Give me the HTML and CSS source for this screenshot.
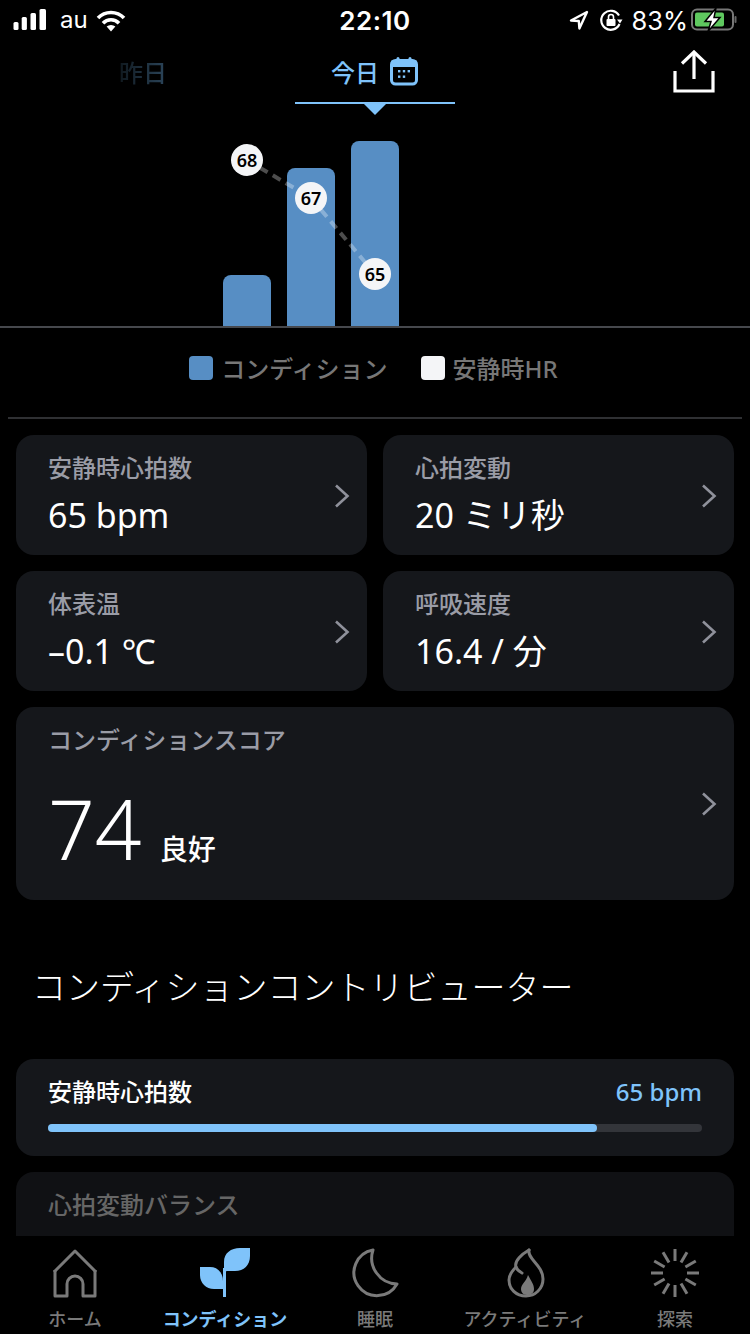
FILE: index.html
```html
<!DOCTYPE html>
<html lang="ja">
<head>
  <meta charset="UTF-8" />
  <meta name="viewport" content="width=device-width, initial-scale=1.0"/>
  <title>コンディション</title>
  <link rel="stylesheet" href="styles.css">
</head>
<body>
<div class="screen">

  <div class="status-bar">
    <div class="status-left">
      <svg class="signal" width="34" height="22" viewBox="0 0 34 22" fill="#fff">
        <rect x="0.5" y="13" width="5" height="8" rx="1.5"/>
        <rect x="8.7" y="8" width="5.2" height="13" rx="1.5"/>
        <rect x="17.5" y="4" width="5.5" height="17" rx="1.5"/>
        <rect x="26.5" y="0" width="6.5" height="21" rx="1.5"/>
      </svg>
      <span class="carrier">au</span>
      <svg class="wifi" width="30" height="22" viewBox="0 0 30 22" fill="none" stroke="#fff" stroke-width="3.6">
        <path d="M2 8 A18 18 0 0 1 28 8"/>
        <path d="M7 13.2 A11 11 0 0 1 23 13.2"/>
        <path d="M15 21.5 L10.6 16.6 A6.5 6.5 0 0 1 19.4 16.6 Z" fill="#fff" stroke="none"/>
      </svg>
    </div>
    <div class="status-time">22:10</div>
    <div class="status-right">
      <svg class="location" width="20" height="20" viewBox="0 0 20 20" fill="none" stroke="#fff" stroke-width="2.4" stroke-linejoin="round">
        <path d="M18 2 L2 10.5 L9.8 11 L10.4 18.5 Z"/>
      </svg>
      <svg class="lock" width="24" height="24" viewBox="0 0 24 24" fill="none" stroke="#fff" stroke-width="2.2">
        <path d="M20 7.5 A9.5 9.5 0 1 0 20.5 16"/>
        <path d="M18 11.5 L23.5 11.5 L21 15.5 Z" fill="#fff" stroke="none"/>
        <rect x="7.5" y="11" width="9" height="7" rx="1" fill="#fff" stroke="none"/>
        <path d="M9.5 11 V9 A2.5 2.5 0 0 1 14.5 9 V11" stroke-width="1.6"/>
      </svg>
      <span class="battery-pct">83%</span>
      <svg width="46" height="24" viewBox="0 0 46 24" fill="none">
        <rect x="1" y="1.5" width="41" height="20" rx="5" stroke="#777" stroke-width="2"/>
        <rect x="4" y="4.5" width="29" height="14" rx="2" fill="#5fc85f"/>
        <rect x="43.5" y="8" width="2" height="7" rx="1" fill="#666"/>
        <path d="M25 0 L14 13.5 H20 L17 23.5 L29 9.5 H23 Z" fill="#fff" stroke="#000" stroke-width="1.5"/>
      </svg>
    </div>
  </div>

  <div class="date-tabs">
    <div class="date-tab-prev">昨日</div>
    <div class="date-tab-current">
      <span>今日</span>
      <svg width="30" height="30" viewBox="0 0 30 30">
        <rect x="2.5" y="4.5" width="25" height="23.5" rx="4" fill="none" stroke="#7fc3fa" stroke-width="3"/>
        <rect x="2.5" y="4.5" width="25" height="6.5" fill="#7fc3fa"/>
        <rect x="7.5" y="1" width="3" height="6" rx="1.5" fill="#7fc3fa"/>
        <rect x="19.5" y="1" width="3" height="6" rx="1.5" fill="#7fc3fa"/>
        <g fill="#7fc3fa">
          <rect x="9" y="14" width="2.4" height="2.4"/>
          <rect x="13.8" y="14" width="2.4" height="2.4"/>
          <rect x="18.6" y="14" width="2.4" height="2.4"/>
          <rect x="9" y="19.5" width="2.4" height="2.4"/>
          <rect x="13.8" y="19.5" width="2.4" height="2.4"/>
        </g>
      </svg>
      <i class="caret"></i>
    </div>
    <svg class="share" width="44" height="44" viewBox="0 0 44 44" fill="none" stroke="#fff" stroke-width="3.2">
      <path d="M3 21 V41 H41 V21"/>
      <path d="M22 29 V3"/>
      <path d="M10 13.5 L22 2 L34 13.5"/>
    </svg>
  </div>

  <div class="chart">
    <div class="bars">
      <div class="bar" style="height: 51px"></div>
      <div class="bar" style="height: 158px"></div>
      <div class="bar" style="height: 185px"></div>
    </div>
    <svg class="chart-overlay" width="750" height="225" viewBox="0 0 750 225">
      <polyline points="247,57 311,95 375,171" fill="none" stroke="#fff" stroke-opacity="0.3" stroke-width="4" stroke-dasharray="9 6"/>
      <g fill="#f4f5f7">
        <circle cx="247" cy="57" r="16"/>
        <circle cx="311" cy="95" r="16"/>
        <circle cx="375" cy="171" r="16"/>
      </g>
      <g class="dot-text" text-anchor="middle">
        <text x="247" y="63.5">68</text>
        <text x="311" y="101.5">67</text>
        <text x="375" y="177.5">65</text>
      </g>
    </svg>
  </div>

  <div class="legend">
    <div class="legend-item"><i class="swatch swatch-blue"></i>コンディション</div>
    <div class="legend-item"><i class="swatch swatch-white"></i>安静時HR</div>
  </div>

  <div class="content">
    <div class="metrics">
      <div class="card metric">
        <div>
          <div class="label">安静時心拍数</div>
          <div class="value">65 bpm</div>
        </div>
        <svg class="chevron" width="16" height="24" viewBox="0 0 16 24"><polyline points="2,1.5 13.5,12 2,22.5"/></svg>
      </div>
      <div class="card metric">
        <div>
          <div class="label">心拍変動</div>
          <div class="value">20 ミリ秒</div>
        </div>
        <svg class="chevron" width="16" height="24" viewBox="0 0 16 24"><polyline points="2,1.5 13.5,12 2,22.5"/></svg>
      </div>
      <div class="card metric">
        <div>
          <div class="label">体表温</div>
          <div class="value">–0.1 ℃</div>
        </div>
        <svg class="chevron" width="16" height="24" viewBox="0 0 16 24"><polyline points="2,1.5 13.5,12 2,22.5"/></svg>
      </div>
      <div class="card metric">
        <div>
          <div class="label">呼吸速度</div>
          <div class="value">16.4 / 分</div>
        </div>
        <svg class="chevron" width="16" height="24" viewBox="0 0 16 24"><polyline points="2,1.5 13.5,12 2,22.5"/></svg>
      </div>
    </div>

    <div class="card score">
      <div>
        <div class="label">コンディションスコア</div>
        <div class="score-row">
          <span class="score-num">74</span>
          <span class="score-word">良好</span>
        </div>
      </div>
      <svg class="chevron" width="16" height="24" viewBox="0 0 16 24"><polyline points="2,1.5 13.5,12 2,22.5"/></svg>
    </div>

    <h2 class="section-title">コンディションコントリビューター</h2>

    <div class="card contrib">
      <div class="contrib-head">
        <span>安静時心拍数</span>
        <span class="contrib-value">65 bpm</span>
      </div>
      <div class="track"><div class="fill" style="width: 83.9%"></div></div>
    </div>

    <div class="card contrib contrib-dim">
      <div class="contrib-head">
        <span>心拍変動バランス</span>
      </div>
    </div>
  </div>

  <nav class="tabbar">
    <div class="tab">
      <svg width="50" height="50" viewBox="0 0 50 50" fill="none" stroke="#7a7a7a" stroke-width="3" stroke-linejoin="round">
        <path d="M4 24 L25 3 L46 24"/>
        <path d="M5 22 V48 H17 V36 A8 8 0 0 1 33 36 V48 H45 V22"/>
      </svg>
      <span>ホーム</span>
    </div>
    <div class="tab tab-active">
      <svg width="50" height="50" viewBox="0 0 50 50" fill="#7fc3fa">
        <path d="M24 24 V14 C24 5 31 0 40 0 H50 V8 C50 17 44 23 35 23 H27 Z"/>
        <path d="M0 19 H10 C18 19 23 25 23 33 V41 H14 C6 41 0 35 0 27 Z"/>
        <rect x="23" y="20" width="3" height="29"/>
      </svg>
      <span>コンディション</span>
    </div>
    <div class="tab">
      <svg width="50" height="50" viewBox="0 0 50 50" fill="none" stroke="#7a7a7a" stroke-width="3" stroke-linejoin="round">
        <path d="M23 2 A23 23 0 1 0 47 36 A26 26 0 0 1 23 2 Z"/>
      </svg>
      <span>睡眠</span>
    </div>
    <div class="tab">
      <svg width="50" height="50" viewBox="0 0 50 50" fill="none" stroke="#7a7a7a" stroke-width="3" stroke-linecap="round">
        <path d="M29 2 C22 6 14 13 16 19 C17 22 20 24 22 25"/>
        <path d="M29 2 C27 11 43 17 43 31 C43 41 35 48 26 48 C16 48 9 41 9 32 C9 27 12 23 16 19"/>
        <path d="M28 27 C31 33 34 36 34 41 C34 45 31 47 27 47 C23 47 21 44 21 41 C21 36 26 34 28 27 Z" fill="#7a7a7a" stroke="none"/>
      </svg>
      <span>アクティビティ</span>
    </div>
    <div class="tab">
      <svg width="50" height="50" viewBox="0 0 50 50" stroke="#7a7a7a" stroke-width="3">
        <g>
          <line x1="25" y1="1" x2="25" y2="13"/>
          <line x1="25" y1="1" x2="25" y2="13" transform="rotate(30 25 25)"/>
          <line x1="25" y1="1" x2="25" y2="13" transform="rotate(60 25 25)"/>
          <line x1="25" y1="1" x2="25" y2="13" transform="rotate(90 25 25)"/>
          <line x1="25" y1="1" x2="25" y2="13" transform="rotate(120 25 25)"/>
          <line x1="25" y1="1" x2="25" y2="13" transform="rotate(150 25 25)"/>
          <line x1="25" y1="1" x2="25" y2="13" transform="rotate(180 25 25)"/>
          <line x1="25" y1="1" x2="25" y2="13" transform="rotate(210 25 25)"/>
          <line x1="25" y1="1" x2="25" y2="13" transform="rotate(240 25 25)"/>
          <line x1="25" y1="1" x2="25" y2="13" transform="rotate(270 25 25)"/>
          <line x1="25" y1="1" x2="25" y2="13" transform="rotate(300 25 25)"/>
          <line x1="25" y1="1" x2="25" y2="13" transform="rotate(330 25 25)"/>
        </g>
      </svg>
      <span>探索</span>
    </div>
  </nav>

</div>
</body>
</html>
```

FILE: styles.css
```css
* {
  box-sizing: border-box;
}

body {
  margin: 0;
  background: #000;
  color: #fff;
  font-family: "Noto Sans", "Noto Sans CJK JP", sans-serif;
}

.screen {
  display: flex;
  flex-direction: column;
  height: 1334px;
  overflow: hidden;
}

/* status bar */
.status-bar {
  display: grid;
  grid-template-columns: 1fr auto 1fr;
  align-items: center;
  height: 40px;
  padding: 0 13px;
}

.status-left,
.status-right {
  display: flex;
  align-items: center;
}

.status-right {
  justify-content: flex-end;
}

.signal {
  margin-right: 13px;
}

.carrier {
  font-family: Inter, sans-serif;
  font-size: 24px;
  line-height: 40px;
  margin-right: 9px;
}

.wifi {
  margin: 2px 0 0 -1px;
}

.status-time {
  font-family: Inter, sans-serif;
  font-weight: 600;
  font-size: 26px;
  letter-spacing: 0.5px;
}

.location {
  margin-right: 10px;
}

.lock {
  margin-right: 8px;
}

.battery-pct {
  font-family: Inter, sans-serif;
  font-size: 25.5px;
  margin-right: 3px;
}

/* date tabs */
.date-tabs {
  display: flex;
  align-items: center;
  height: 64px;
  padding-left: 119px;
  padding-right: 34px;
}

.date-tab-prev {
  width: 176px;
  padding-bottom: 2px;
  font-size: 24px;
  font-weight: 500;
  background: linear-gradient(90deg, #10191f 0, #2a4358 46px);
  -webkit-background-clip: text;
  background-clip: text;
  color: transparent;
}

.date-tab-current {
  position: relative;
  display: flex;
  justify-content: center;
  align-items: center;
  gap: 10px;
  width: 160px;
  height: 64px;
  border-bottom: 2px solid #7fc3fa;
  color: #7fc3fa;
  font-size: 24px;
  font-weight: 500;
}

.date-tab-current svg {
  margin-bottom: 1px;
}

.caret {
  position: absolute;
  left: 68px;
  top: 63px;
  width: 0;
  height: 0;
  border-left: 12px solid transparent;
  border-right: 12px solid transparent;
  border-top: 12px solid #7fc3fa;
}

.share {
  margin-left: auto;
}

/* chart */
.chart {
  position: relative;
  height: 224px;
  border-bottom: 2px solid #46484d;
}

.bars {
  display: flex;
  align-items: flex-end;
  gap: 16px;
  height: 222px;
  padding-left: 223px;
}

.bar {
  width: 48px;
  background: #578ec4;
  border-radius: 8px 8px 0 0;
}

.chart-overlay {
  position: absolute;
  left: 0;
  top: -1px;
}

.dot-text {
  font-family: "Noto Sans", sans-serif;
  font-size: 18px;
  font-weight: 600;
  fill: #000;
}

/* legend */
.legend {
  display: flex;
  justify-content: center;
  gap: 33px;
  align-items: center;
  height: 91px;
  margin: 0 8px;
  padding: 0 3px 10px 0;
  border-bottom: 2px solid #2f3033;
  color: #777;
  font-size: 24px;
  font-weight: 500;
}

.legend-item {
  display: flex;
  align-items: center;
  gap: 8px;
}

.swatch {
  width: 24px;
  height: 24px;
  border-radius: 4px;
}

.swatch-blue {
  background: #578ec4;
}

.swatch-white {
  background: #f4f5f7;
}

/* cards */
.content {
  flex: 1;
  min-height: 0;
  overflow: hidden;
  padding: 16px 16px 0;
}

.card {
  background: #15171b;
  border-radius: 18px;
}

.metrics {
  display: grid;
  grid-template-columns: 1fr 1fr;
  gap: 16px;
}

.metric {
  display: flex;
  justify-content: space-between;
  align-items: center;
  height: 120px;
  padding: 2px 17px 0 32px;
}

.label {
  color: #9a9ca6;
  font-size: 24px;
  font-weight: 500;
  line-height: 32px;
}

.value {
  font-size: 34px;
  line-height: 48px;
  margin: 7px 0 1px;
}

.chevron {
  fill: none;
  stroke: #8f919b;
  stroke-width: 2.6;
}

.score {
  display: flex;
  justify-content: space-between;
  align-items: center;
  height: 193px;
  margin-top: 16px;
  padding: 0 17px 0 32px;
}

.score > div {
  align-self: flex-start;
  padding-top: 17px;
}

.score-row {
  display: flex;
  align-items: baseline;
  gap: 18px;
  margin-top: 16px;
}

.score-num {
  font-size: 82px;
  font-weight: 300;
  line-height: 112px;
}

.score-word {
  font-size: 28px;
  font-weight: 500;
}

.section-title {
  margin: 65px 0 50px 16px;
  font-size: 34px;
  font-weight: 300;
  line-height: 44px;
}

.contrib {
  height: 97px;
  padding: 17px 32px 0;
}

.contrib-head {
  display: flex;
  justify-content: space-between;
  font-size: 24px;
  font-weight: 500;
  line-height: 32px;
}

.contrib-value {
  color: #7fc3fa;
}

.track {
  height: 8px;
  margin-top: 16px;
  background: #33353a;
  border-radius: 4px;
}

.fill {
  height: 8px;
  background: #7fc3fa;
  border-radius: 4px;
}

.contrib-dim {
  margin-top: 16px;
  background: #101114;
  color: #666;
}

/* bottom tabs */
.tabbar {
  display: grid;
  grid-template-columns: repeat(5, 150px);
  flex-shrink: 0;
  height: 98px;
  padding-top: 12px;
  background: #000;
}

.tab {
  display: flex;
  flex-direction: column;
  align-items: center;
  color: #7a7a7a;
  font-size: 18px;
  font-weight: 500;
  line-height: 24px;
}

.tab svg {
  margin-bottom: 9px;
}

.tab-active {
  color: #7fc3fa;
  font-weight: 700;
}
```
